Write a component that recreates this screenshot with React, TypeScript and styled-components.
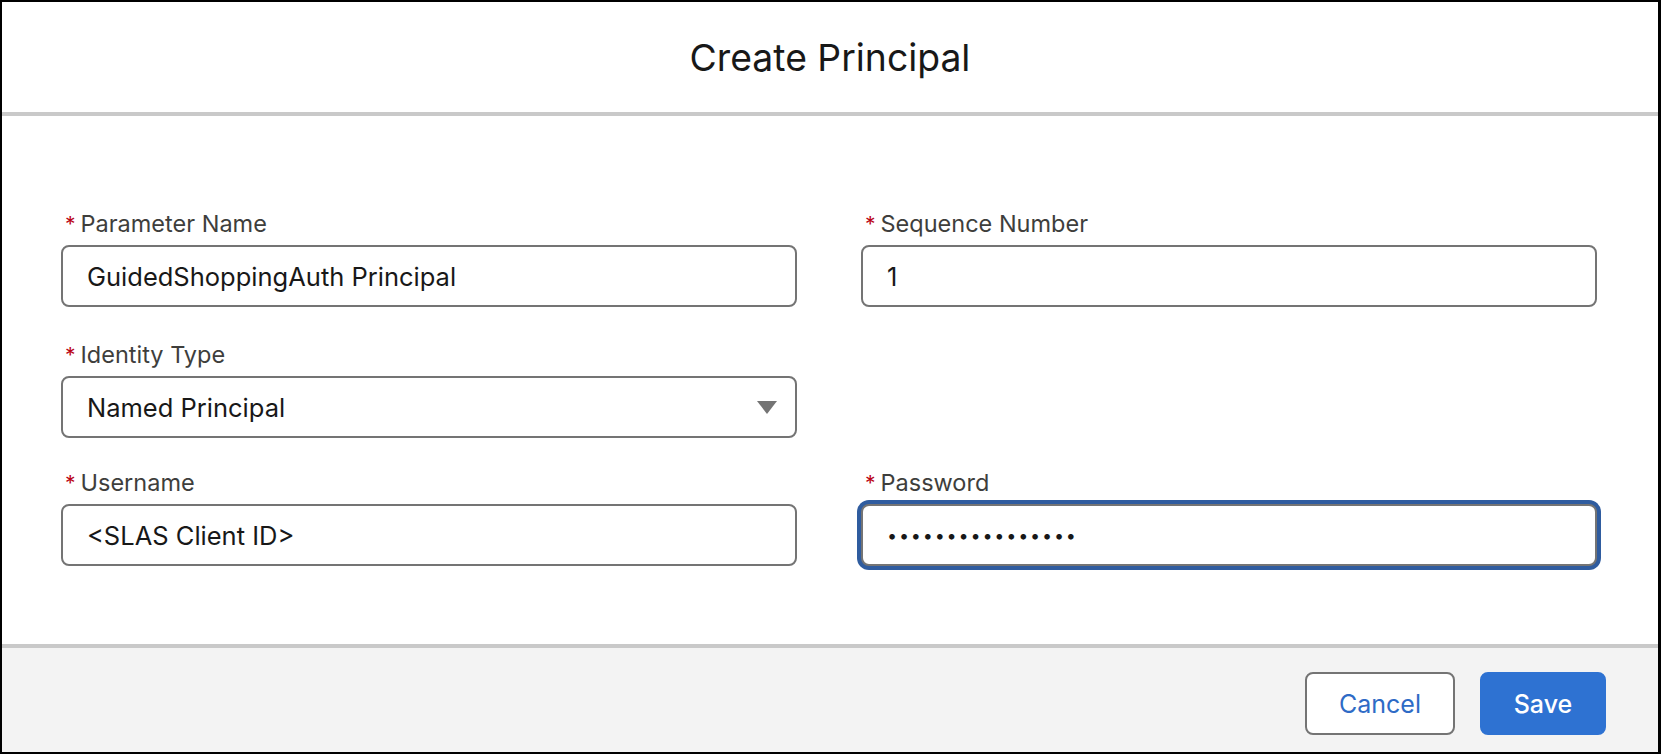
import styled, { createGlobalStyle } from "styled-components";

const GlobalStyle = createGlobalStyle`
  html, body {
    margin: 0;
    padding: 0;
    background: #ffffff;
  }

  body {
    font-family: Inter, "Liberation Sans", Arial, sans-serif;
    color: #181818;
  }

  * {
    box-sizing: border-box;
  }
`;

interface FieldProps {
  label: string;
  value: string;
  focused?: boolean;
  secret?: boolean;
}

const Field = ({ label, value, focused, secret }: FieldProps) => {
  return (
    <FieldBox>
      <Label>
        <Required>*</Required>
        {label}
      </Label>
      <Input
        readOnly
        value={value}
        $focused={focused}
        $secret={secret}
      />
    </FieldBox>
  );
};

const SelectField = ({ label, value }: { label: string; value: string }) => {
  return (
    <FieldBox>
      <Label>
        <Required>*</Required>
        {label}
      </Label>
      <SelectBox>
        <span>{value}</span>
        <svg width="20" height="13" viewBox="0 0 20 13">
          <path d="M0 0 H20 L10 13 Z" fill="#747474" />
        </svg>
      </SelectBox>
    </FieldBox>
  );
};

export default function App() {
  return (
    <>
      <GlobalStyle />
      <Modal>
        <Header>
          <Title>Create Principal</Title>
        </Header>
        <Body>
          <Row>
            <Field label="Parameter Name" value="GuidedShoppingAuth Principal" />
            <Field label="Sequence Number" value="1" />
          </Row>
          <Row $top={34}>
            <SelectField label="Identity Type" value="Named Principal" />
          </Row>
          <Row $top={31}>
            <Field label="Username" value="<SLAS Client ID>" />
            <Field label="Password" value={"\u2022".repeat(16)} focused secret />
          </Row>
        </Body>
        <Footer>
          <Button>Cancel</Button>
          <Button $brand>Save</Button>
        </Footer>
      </Modal>
    </>
  );
}

const Modal = styled.div`
  width: 1661px;
  height: 754px;
  display: flex;
  flex-direction: column;
  border: 2px solid #000000;
  border-right-width: 3px;
  background: #ffffff;
`;

const Header = styled.header`
  height: 114px;
  flex-shrink: 0;
  display: flex;
  align-items: center;
  justify-content: center;
  padding-top: 2px;
  border-bottom: 4px solid #c9c9c9;
`;

const Title = styled.h1`
  margin: 0;
  font-size: 37.3px;
  font-weight: 400;
  line-height: 1.2;
  color: #181818;
`;

const Body = styled.main`
  flex: 1;
  display: flex;
  flex-direction: column;
  padding: 94px 61px 0 59px;
`;

const Row = styled.div<{ $top?: number }>`
  display: grid;
  grid-template-columns: 1fr 1fr;
  column-gap: 64px;
  margin-top: ${({ $top }) => $top ?? 0}px;
`;

const FieldBox = styled.div`
  display: flex;
  flex-direction: column;
`;

const Label = styled.label`
  display: flex;
  align-items: baseline;
  height: 28px;
  margin-bottom: 7px;
  padding-left: 4px;
  font-size: 23.5px;
  line-height: 28px;
  color: #3e3e3c;
`;

const Required = styled.abbr`
  margin-right: 5px;
  font-size: 21px;
  color: #ba0517;
  text-decoration: none;
`;

const Input = styled.input<{ $focused?: boolean; $secret?: boolean }>`
  height: 62px;
  width: 100%;
  padding: 0 24px;
  border: 2px solid #747474;
  border-radius: 8px;
  background: #ffffff;
  font-family: Inter, "Liberation Sans", Arial, sans-serif;
  font-size: ${({ $secret }) => ($secret ? 18 : 25.5)}px;
  letter-spacing: ${({ $secret }) => ($secret ? 1.8 : 0)}px;
  color: #181818;
  outline: none;
  box-shadow: ${({ $focused }) => ($focused ? "0 0 0 4px #2f5c9f" : "none")};
`;

const SelectBox = styled.div`
  height: 62px;
  display: flex;
  align-items: center;
  justify-content: space-between;
  padding: 0 18px 0 24px;
  border: 2px solid #747474;
  border-radius: 8px;
  font-size: 25.5px;
  color: #181818;
`;

const Footer = styled.footer`
  height: 108px;
  flex-shrink: 0;
  display: flex;
  justify-content: flex-end;
  align-items: flex-start;
  gap: 25px;
  padding: 24px 52px 0 0;
  border-top: 4px solid #c9c9c9;
  background: #f3f3f3;
`;

const Button = styled.button<{ $brand?: boolean }>`
  height: 63px;
  min-width: ${({ $brand }) => ($brand ? 126 : 150)}px;
  padding: 0 30px;
  border: 2px solid ${({ $brand }) => ($brand ? "#2e72d2" : "#747474")};
  border-radius: 8px;
  background: ${({ $brand }) => ($brand ? "#2e72d2" : "#ffffff")};
  color: ${({ $brand }) => ($brand ? "#ffffff" : "#2e6bc6")};
  font-family: Inter, "Liberation Sans", Arial, sans-serif;
  font-size: 25px;
  font-weight: ${({ $brand }) => ($brand ? 500 : 400)};
`;
